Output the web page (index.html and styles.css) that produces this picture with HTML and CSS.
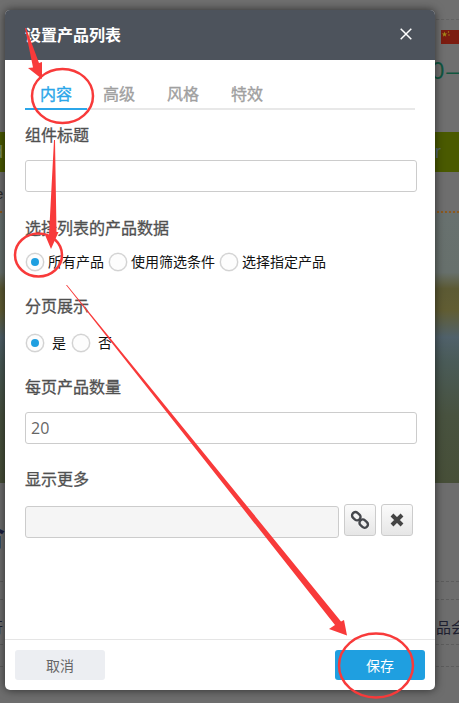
FILE: index.html
```html
<!DOCTYPE html>
<html lang="zh-CN">
<head>
<meta charset="utf-8">
<title>设置产品列表</title>
<link rel="stylesheet" href="styles.css">
</head>
<body>
<div class="page">
  <div class="scene">
    <div class="top">
      <div class="top-rule"></div>
      <div class="flag">
        <svg viewBox="0 0 18 14" width="18" height="14"><rect width="18" height="14" fill="#7c1c10"/><path d="M3.500 1.500l.7 2 2.100 0-1.700 1.300.6 2-1.700-1.200-1.700 1.200.6-2-1.700-1.300 2.100 0z" fill="#a58a18"/><circle cx="7.500" cy="2" r=".7" fill="#a58a18"/><circle cx="8" cy="5" r=".7" fill="#a58a18"/></svg>
      </div>
      <div class="phone">0<span class="phone-dash">–</span><span class="phone-blue">6</span></div>
    </div>
    <div class="green"><span class="green-left">d</span><span class="green-right">r</span></div>
    <div class="strip"><span class="strip-text">e</span></div>
    <div class="dotted"></div>
    <div class="photo"></div>
    <div class="lower">
      <div class="big-char">合</div>
      <div class="dash-a"></div>
      <div class="dash-b"></div>
      <div class="lower-text"><span class="lt-left">行</span><span class="lt-right">品会</span></div>
      <div class="dash-c"></div>
      <div class="dash-d"></div>
    </div>
  </div>

  <div class="modal">
    <div class="modal-head">
      <span class="modal-title">设置产品列表</span>
      <svg class="close" viewBox="0 0 12 12" width="12" height="12"><path d="M.7.7l10.600 10.600M11.300.7L.7 11.300" stroke="#fff" stroke-width="1.500" fill="none"/></svg>
    </div>
    <div class="modal-body">
      <div class="tabs">
        <span class="tab active">内容</span>
        <span class="tab">高级</span>
        <span class="tab">风格</span>
        <span class="tab">特效</span>
      </div>
      <div class="label l-title">组件标题</div>
      <input class="input" type="text">
      <div class="label l-data">选择列表的产品数据</div>
      <div class="radios r-data">
        <span class="radio on"></span><span class="rt">所有产品</span>
        <span class="radio"></span><span class="rt">使用筛选条件</span>
        <span class="radio"></span><span class="rt">选择指定产品</span>
      </div>
      <div class="label l-page">分页展示</div>
      <div class="radios r-page">
        <span class="radio on"></span><span class="rt wide">是</span>
        <span class="radio"></span><span class="rt wide">否</span>
      </div>
      <div class="label l-count">每页产品数量</div>
      <input class="input" type="text" value="20">
      <div class="label l-more">显示更多</div>
      <div class="link-row">
        <input class="input disabled" type="text" disabled>
        <button class="icon-btn first" type="button">
          <svg viewBox="0 0 20 20" width="20" height="20"><g fill="none" stroke="#45474c" stroke-width="2.400"><rect x="1.800" y="2.900" width="9" height="6.600" rx="3.200" transform="rotate(42 6.300 6.200)"/><rect x="9.200" y="10.300" width="9" height="6.600" rx="3.200" transform="rotate(42 13.700 13.600)"/></g></svg>
        </button>
        <button class="icon-btn" type="button">
          <svg viewBox="0 0 14 14" width="14" height="14"><path d="M2 2l10 10M12 2L2 12" stroke="#444" stroke-width="4" fill="none"/></svg>
        </button>
      </div>
    </div>
    <div class="modal-foot">
      <button class="btn cancel" type="button">取消</button>
      <button class="btn save" type="button">保存</button>
    </div>
  </div>

  <svg class="marks" viewBox="0 0 459 703" width="459" height="703">
    <g fill="#f83a3a">
      <path d="M25 28L26 28L39 63L42 62L42 79L28 68L33 67.500Z"/>
      <path d="M54 140L55 140L56.500 232L58.500 232L51 249L45.500 236L49 235Z"/>
      <path d="M66 285L67 285L341 621.500L344 620L347 635.500L329 629L335 625Z"/>
    </g>
    <g fill="none" stroke="#f83a3a" stroke-width="2.500">
      <ellipse cx="62.500" cy="96" rx="30.500" ry="27"/>
      <ellipse cx="38.500" cy="255" rx="23.500" ry="21.500"/>
      <ellipse cx="376" cy="665.500" rx="37" ry="32"/>
    </g>
  </svg>
</div>
</body>
</html>
```
FILE: styles.css
```css
* { box-sizing: border-box; }
html, body { margin: 0; padding: 0; }
body {
  width: 459px;
  height: 703px;
  overflow: hidden;
  font-family: "Noto Sans CJK SC", "Open Sans", sans-serif;
}
.page { position: relative; width: 459px; height: 703px; overflow: hidden; background: #6d6d6d; }

/* dimmed page behind the dialog */
.scene { width: 459px; height: 703px; overflow: hidden; }
.top { height: 132px; background: #6f6f6f; padding-top: 19px; overflow: hidden; }
.top-rule { height: 0; margin-left: 342px; border-top: 1px dashed #626262; }
.flag { margin: 10px 0 0 441px; height: 14px; line-height: 0; }
.phone {
  margin: 14px 0 0 431px;
  white-space: nowrap;
  font: 24px/26px "Liberation Sans", sans-serif;
  color: #10563f;
}
.phone-dash { margin-left: 2px; }
.phone-blue { color: #1b7d90; margin-left: 1px; }
.green {
  height: 40px;
  background: #4a5a00;
  display: flex;
  justify-content: space-between;
  align-items: center;
  padding-right: 18px;
  font: 18px "Liberation Sans", sans-serif;
  color: #7c8a5a;
}
.green-left { margin-left: -7px; }
.green-right { color: #56686e; }
.strip { height: 39px; background: #6e6e6e; padding-top: 12px; color: #2b2b2b; font: 15px/20px "Liberation Sans", sans-serif; }
.strip-text { display: block; margin-left: -5px; }
.dotted { height: 2px; border-top: 2px dotted #8a5a1e; background: #6e6e6e; }
.photo {
  height: 270px;
  background: linear-gradient(180deg, #68716f 0%, #67706c 22%, #5c5a34 28%, #615d33 36%, #50616a 46%, #4a5b58 55%, #48523f 75%, #474f38 100%);
}
.lower { height: 220px; background: #6d6d6d; padding-top: 36px; }
.big-char { height: 30px; margin-left: -23px; font-size: 28px; line-height: 30px; font-weight: 700; color: #1b1d3e; }
.dash-a { margin-top: 32px; border-top: 1px dashed #5c5c5c; }
.dash-b { margin-top: 17px; border-top: 1px dashed #5c5c5c; }
.lower-text {
  display: flex;
  justify-content: space-between;
  height: 24px;
  margin-top: 15px;
  font-size: 15px;
  line-height: 24px;
  color: #1e2030;
}
.lt-left { margin-left: -12px; }
.lt-right { margin-right: -7px; }
.dash-c { margin-top: 5px; border-top: 1px dashed #5c5c5c; }
.dash-d { margin-top: 21px; border-top: 1px dashed #5c5c5c; }

/* dialog */
.modal {
  position: absolute;
  left: 5px;
  top: 10px;
  width: 430px;
  height: 680px;
  display: flex;
  flex-direction: column;
  background: #fff;
  border-radius: 5px;
  overflow: hidden;
}
.page::after {
  content: "";
  position: absolute;
  left: 5px;
  top: 10px;
  width: 430px;
  height: 680px;
  border-radius: 5px;
  box-shadow: 0 0 10px rgba(0, 0, 0, .6);
  pointer-events: none;
}
.modal-head {
  flex: none;
  height: 50px;
  display: flex;
  align-items: center;
  justify-content: space-between;
  padding: 0 23px 2px 20px;
  background: #4d535c;
}
.modal-title { font-size: 16px; line-height: 24px; font-weight: 700; color: #fff; }
.modal-body { flex: 1; padding: 0 18px 0 20px; }
.tabs { display: flex; margin: 20px 2px 0 0; border-bottom: 2px solid #e8e8e8; }
.tab {
  width: 64px;
  height: 28px;
  font-size: 16px;
  line-height: 26px;
  text-align: center;
  -webkit-text-stroke: .35px currentColor;
  color: #a0a0a0;
}
.tab:first-child { width: 62px; }
.tab.active { color: #2ba6e9; height: 30px; margin-bottom: -2px; border-bottom: 2px solid #2ba6e9; }
.label { height: 24px; font-size: 16px; line-height: 24px; -webkit-text-stroke: .3px currentColor; color: #505050; }
.l-title { margin: 12px 0 14px; }
.l-data { margin: 23px 0 13px; }
.l-page { margin: 21px 0 16px; }
.l-count { margin: 21px 0 14px; }
.l-more { margin: 22px 0 14px; }
.input {
  display: block;
  width: 392px;
  height: 32px;
  padding: 0 5px;
  border: 1px solid #ccc;
  border-radius: 3px;
  background: #fff;
  outline: none;
  font: 16px "Open Sans", sans-serif;
  color: #666;
}
.radios { display: flex; align-items: center; height: 20px; padding-left: 1px; }
.radio {
  position: relative;
  flex: none;
  width: 18px;
  height: 18px;
  border: 1px solid #cfcfcf;
  border-radius: 50%;
  background: #fdfdfd;
  box-shadow: 0 0 0 .5px #ddd;
}
.radio.on::after {
  content: "";
  position: absolute;
  left: 4px;
  top: 4px;
  width: 8px;
  height: 8px;
  border-radius: 50%;
  background: #1f9fe0;
}
.rt { margin: 0 5px 2px 4px; font-size: 14px; line-height: 18px; color: #111; white-space: nowrap; }
.rt.wide { margin: 0 6px 2px 8px; }
.link-row { display: flex; align-items: flex-start; }
.input.disabled { width: 314px; margin-top: 2px; background: #f5f5f5; flex: none; }
.icon-btn {
  flex: none;
  display: flex;
  align-items: center;
  justify-content: center;
  width: 32px;
  height: 32px;
  margin-left: 5px;
  padding: 0;
  border: 1px solid #ccc;
  border-radius: 3px;
  background: linear-gradient(180deg, #fbfbfb, #e6e6e6);
}
.modal-foot {
  flex: none;
  height: 51px;
  display: flex;
  justify-content: space-between;
  padding: 10px 10px;
  border-top: 1px solid #e5e5e5;
}
.btn {
  width: 90px;
  height: 30px;
  padding: 0;
  border: 0;
  border-radius: 3px;
  font: 14px/28px "Noto Sans CJK SC", sans-serif;
}
.cancel { background: #eceef2; color: #666; }
.save { background: #1f9fe0; color: #fff; }

/* hand-drawn annotations on top of the screenshot */
.marks { position: absolute; left: 0; top: 0; z-index: 2; }
```
